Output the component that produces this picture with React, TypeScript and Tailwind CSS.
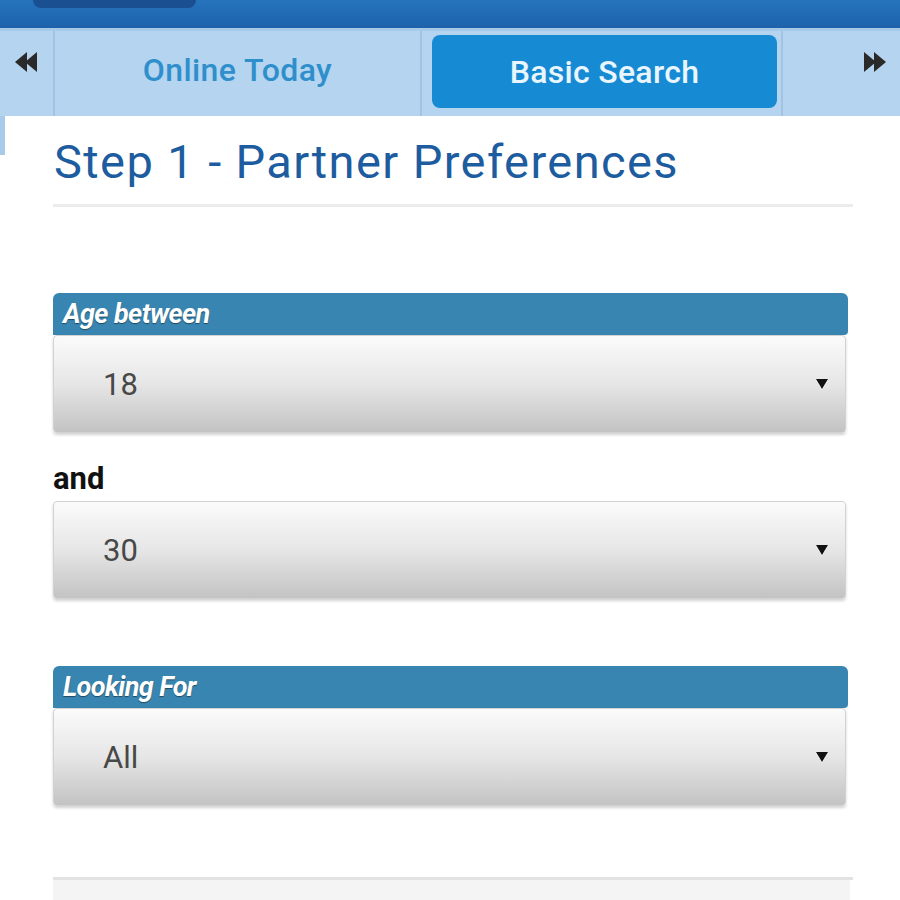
import React from "react";

function Arrow() {
  return (
    <svg width="14" height="14" viewBox="0 0 14 14" className="drop-shadow-[0_1px_0_rgba(255,255,255,0.8)]">
      <path d="M1 2 L13 2 L7 12 Z" fill="#111" />
    </svg>
  );
}

function Select({ value }: { value: string }) {
  return (
    <div className="h-[98px] w-[793px] rounded-[4px] border border-[#d2d2d2] bg-gradient-to-b from-[#fbfbfb] via-[#e6e6e6] to-[#c3c3c3] shadow-[0_2px_3px_rgba(0,0,0,0.18)] flex items-center justify-between pl-[49px] pr-[16px]">
      <span className="text-[31px] text-[#484848] leading-none">{value}</span>
      <Arrow />
    </div>
  );
}

function LabelBar({ text }: { text: string }) {
  return (
    <div className="h-[42px] w-[795px] rounded-t-[6px] rounded-br-[4px] bg-[#3885b1] flex items-center pl-[10px]">
      <span className="text-white italic font-bold text-[27px] tracking-[-0.6px] [text-shadow:0_1px_1px_rgba(0,0,0,0.45)]">{text}</span>
    </div>
  );
}

function DoubleLeft() {
  return (
    <svg width="28" height="24" viewBox="0 0 28 24">
      <path d="M2 12 L14 2 L14 22 Z" fill="#2a2a2a" />
      <path d="M12 12 L24 2 L24 22 Z" fill="#2a2a2a" />
    </svg>
  );
}

function DoubleRight() {
  return (
    <svg width="28" height="24" viewBox="0 0 28 24">
      <path d="M26 12 L14 2 L14 22 Z" fill="#2a2a2a" />
      <path d="M16 12 L4 2 L4 22 Z" fill="#2a2a2a" />
    </svg>
  );
}

export default function App() {
  return (
    <div className="w-[900px] h-[900px] overflow-hidden bg-white font-['Roboto',sans-serif]">
      {/* top bar */}
      <div className="h-[28px] bg-gradient-to-b from-[#2674bc] to-[#1c62ab] relative">
        <div className="absolute left-[33px] top-0 w-[163px] h-[8px] rounded-b-[8px] bg-[#1a4f92]" />
      </div>
      <div className="h-[3px] bg-[#a7c9e8]" />
      {/* tab bar */}
      <div className="h-[85px] bg-[#b4d4ef] flex">
        <div className="w-[55px] flex items-start justify-center pt-[19px] border-r-2 border-[#a3c3e0]">
          <DoubleLeft />
        </div>
        <div className="w-[367px] flex items-center justify-center pb-[7px] border-r-2 border-[#a3c3e0]">
          <span className="text-[32px] text-[#2f8fcc] font-medium tracking-[0.4px]">Online Today</span>
        </div>
        <div className="w-[361px] flex items-start pl-[10px] pt-[4px] border-r-2 border-[#a3c3e0]">
          <div className="w-[345px] h-[73px] rounded-[8px] bg-[#168bd3] flex items-center justify-center">
            <span className="text-[32px] text-[#eaf6ff] font-medium tracking-[0.3px]">Basic Search</span>
          </div>
        </div>
        <div className="flex-1 flex items-start justify-end pr-[12px] pt-[19px]">
          <DoubleRight />
        </div>
      </div>
      {/* content */}
      <div className="flex">
        <div className="w-[5px] h-[39px] bg-[#a9cbea]" />
        <div className="pl-[48px] flex flex-col">
          <h1 className="text-[47px] text-[#1d5c9e] leading-none mt-[22px] ml-[1px] tracking-[1.4px]">Step 1 - Partner Preferences</h1>
          <div className="w-[800px] h-[3px] bg-[#ececec] mt-[19px]" />
          <div className="mt-[86px]">
            <LabelBar text="Age between" />
            <Select value="18" />
          </div>
          <div className="text-[31px] font-bold text-[#111] mt-[30px] leading-none">and</div>
          <div className="mt-[7px]">
            <Select value="30" />
          </div>
          <div className="mt-[67px]">
            <LabelBar text="Looking For" />
            <Select value="All" />
          </div>
          <div className="mt-[71px] w-[800px] h-[3px] bg-[#e2e2e2]" />
          <div className="w-[797px] h-[40px] bg-[#f4f4f4]" />
        </div>
      </div>
    </div>
  );
}
